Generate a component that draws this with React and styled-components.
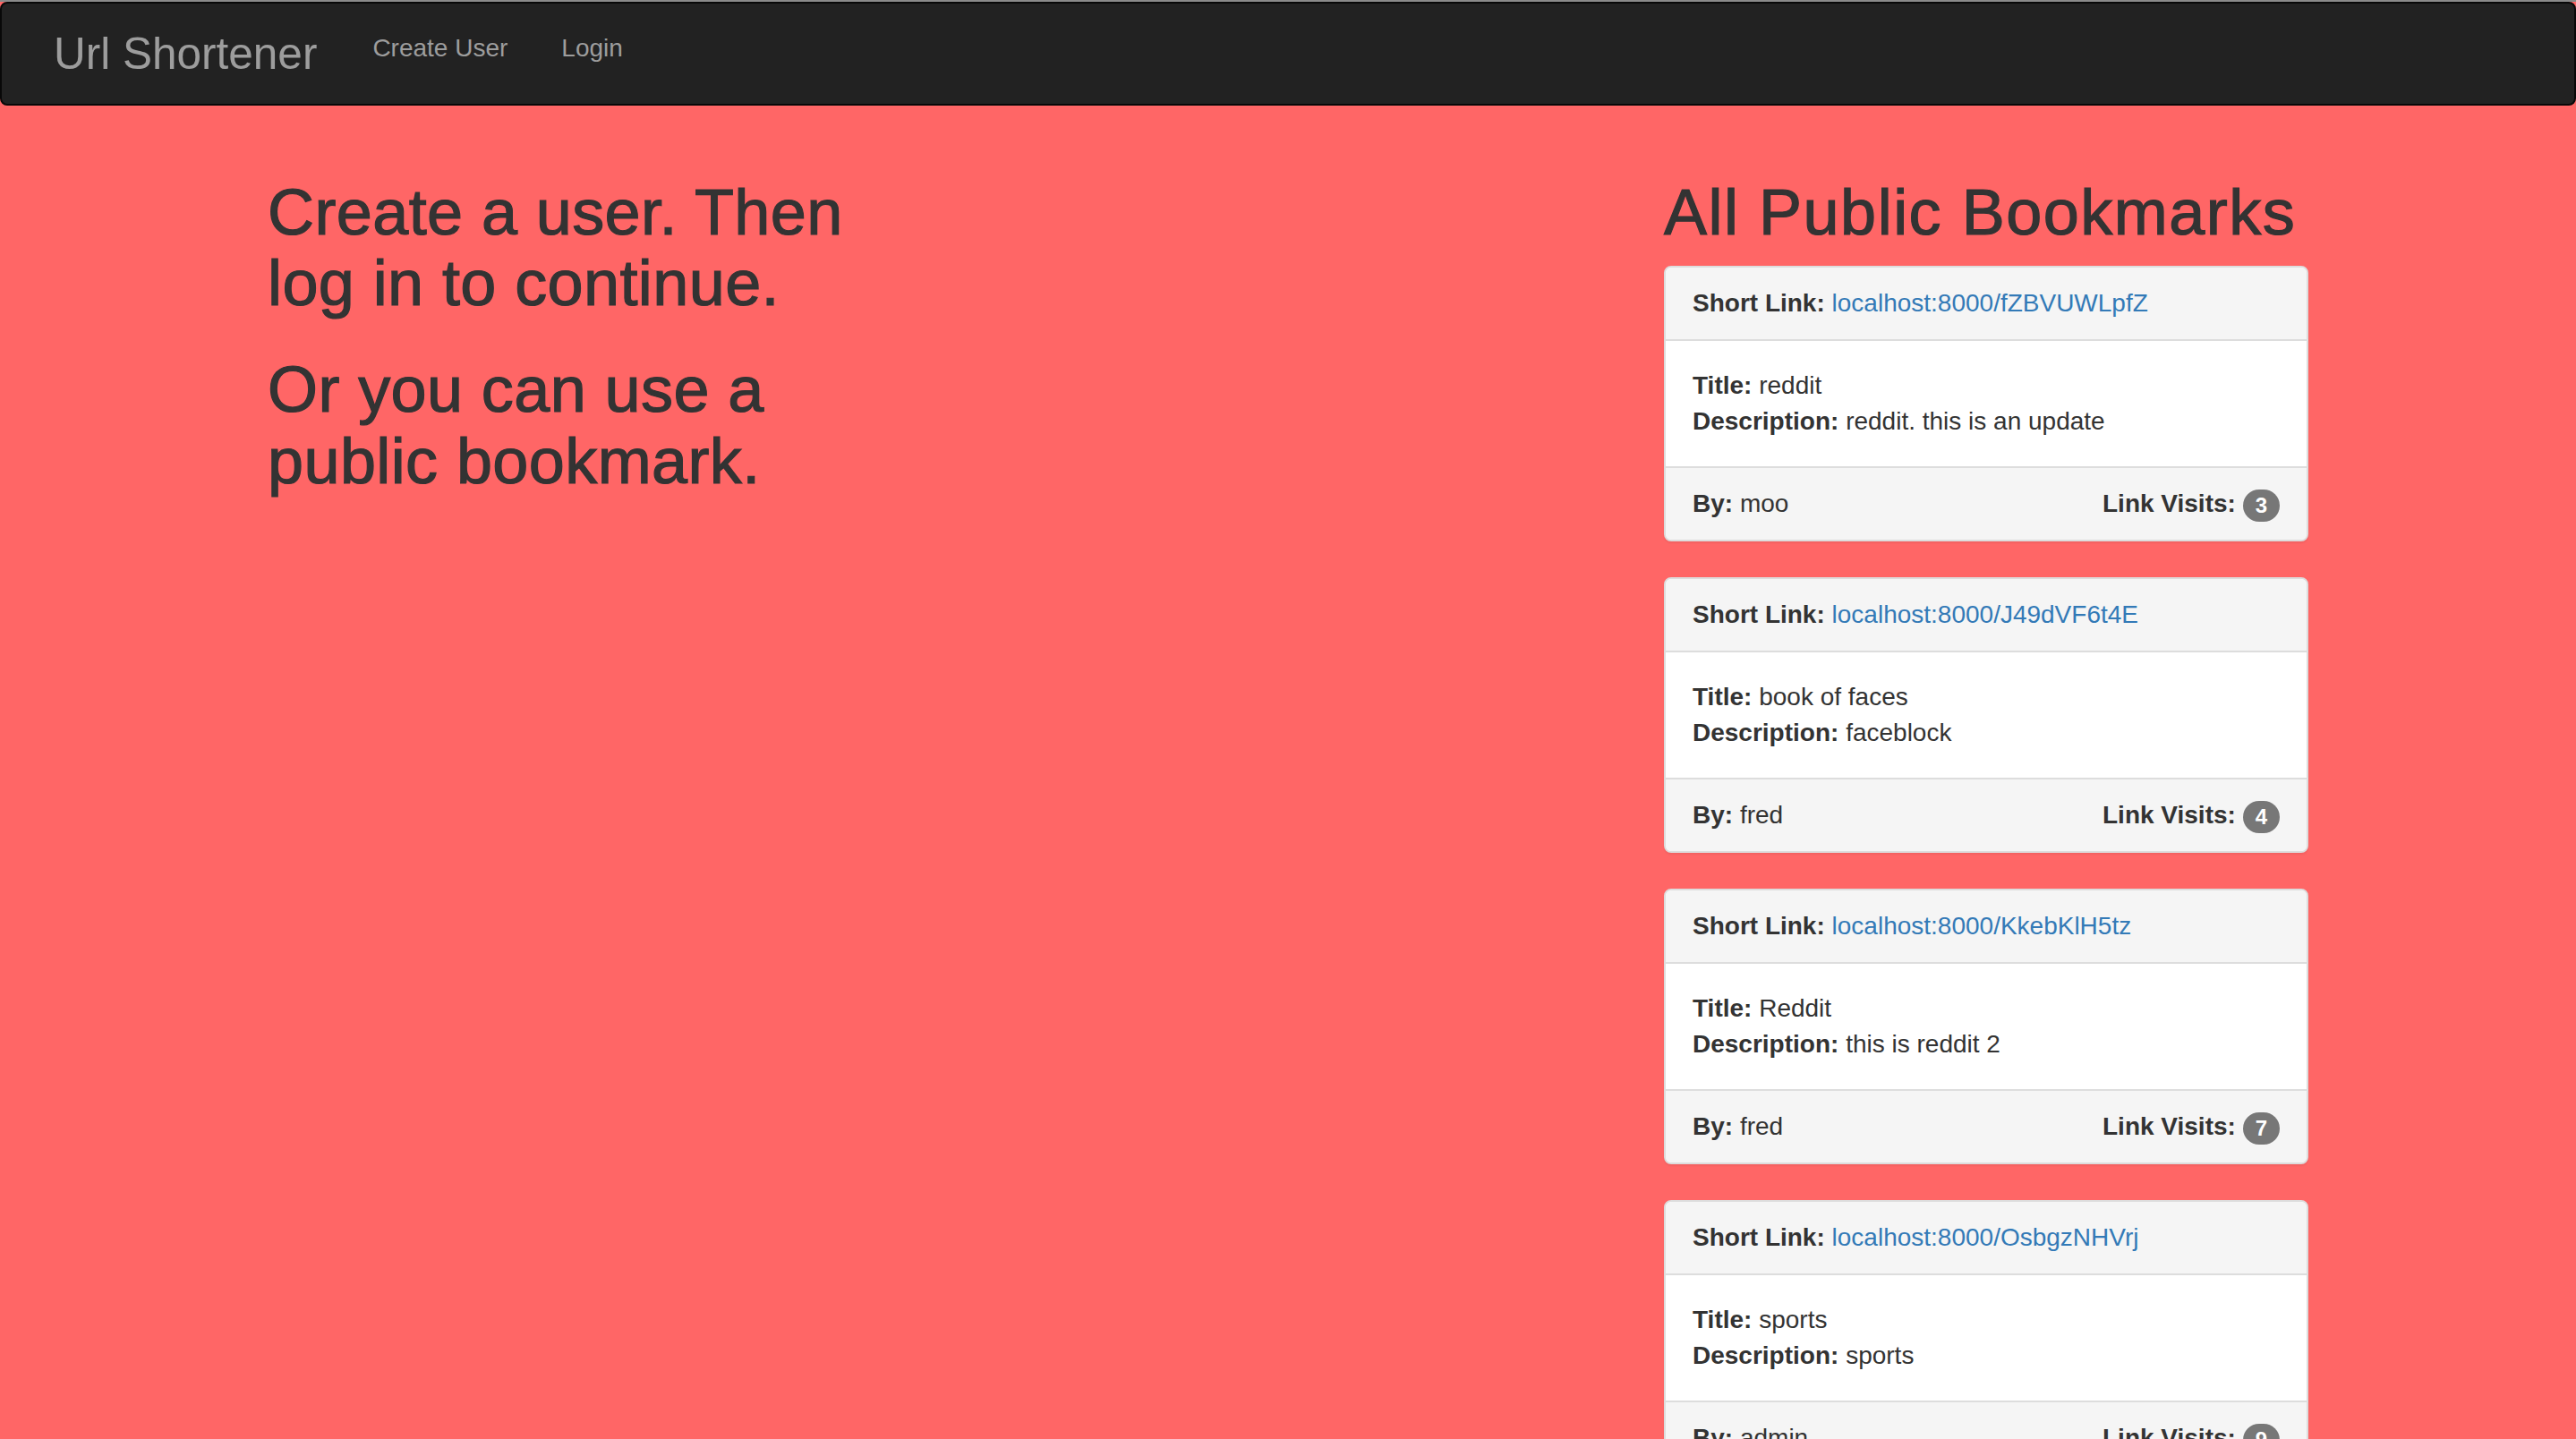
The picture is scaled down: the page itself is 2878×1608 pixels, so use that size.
import React from "react"
import styled, { createGlobalStyle } from "styled-components"

const GlobalStyle = createGlobalStyle`
  html {
    scrollbar-width: none;
  }
  html::-webkit-scrollbar {
    display: none;
  }
  body {
    margin: 0;
    border-top: 2px solid #8a8a8a;
    background: #ff6666;
    color: #333;
    font-family: "Liberation Sans", Arial, sans-serif;
    font-size: 28px;
    line-height: 40px;
  }
  * {
    box-sizing: border-box;
  }
`

const Navbar = styled.nav`
  display: flex;
  align-items: flex-start;
  height: 116px;
  margin-bottom: 40px;
  background: #222;
  border: 2px solid #080808;
  border-radius: 8px;
`

const Brand = styled.a`
  padding: 0 32px 0 58px;
  font-size: 49.5px;
  line-height: 112px;
  color: #9d9d9d;
  text-decoration: none;
`

const NavList = styled.ul`
  display: flex;
  margin: 0;
  padding: 0;
  list-style: none;
`

const NavLink = styled.a`
  display: block;
  padding: 30px;
  font-size: 28px;
  line-height: 40px;
  color: #9d9d9d;
  text-decoration: none;
`

const Container = styled.div`
  width: 2340px;
  margin: 0 auto;
  padding: 0 30px;
`

const Row = styled.div`
  display: grid;
  grid-template-columns: repeat(3, 1fr);
  column-gap: 60px;
`

const Column = styled.div`
  grid-column: ${p => p.$col};
`

// Helvetica Neue Medium stand-in: regular weight with a thin stroke
const Heading = styled.h1`
  margin: 40px 0 20px;
  font-size: 72px;
  font-weight: 500;
  line-height: 1.1;
  letter-spacing: ${p => p.$spacing || "0.4px"};
  color: #333;
  -webkit-text-stroke: 1.2px #333;
`

const Panel = styled.div`
  margin-bottom: 40px;
  background: #fff;
  border: 2px solid #ddd;
  border-radius: 8px;
  box-shadow: 0 2px 2px rgba(0, 0, 0, 0.05);
`

const PanelHeading = styled.div`
  padding: 20px 30px;
  background: #f5f5f5;
  border-bottom: 2px solid #ddd;
  border-radius: 6px 6px 0 0;
`

const PanelBody = styled.div`
  padding: 30px;
`

const PanelFooter = styled.div`
  display: flex;
  justify-content: space-between;
  align-items: baseline;
  padding: 20px 30px;
  background: #f5f5f5;
  border-top: 2px solid #ddd;
  border-radius: 0 0 6px 6px;
`

const Label = styled.strong`
  font-weight: bold;
`

const ShortLink = styled.a`
  color: #337ab7;
  text-decoration: none;
`

const Badge = styled.span`
  display: inline-block;
  min-width: 20px;
  padding: 6px 14px;
  font-size: 24px;
  font-weight: bold;
  line-height: 1;
  vertical-align: middle;
  text-align: center;
  color: #fff;
  background: #777;
  border-radius: 20px;
`

const bookmarks = [
  { code: "fZBVUWLpfZ", title: "reddit", description: "reddit. this is an update", by: "moo", visits: 3 },
  { code: "J49dVF6t4E", title: "book of faces", description: "faceblock", by: "fred", visits: 4 },
  { code: "KkebKlH5tz", title: "Reddit", description: "this is reddit 2", by: "fred", visits: 7 },
  { code: "OsbgzNHVrj", title: "sports", description: "sports", by: "admin", visits: 9 }
]

const BookmarkPanel = ({ bookmark }) => (
  <Panel>
    <PanelHeading>
      <Label>Short Link:</Label>{" "}
      <ShortLink href='#'>localhost:8000/{bookmark.code}</ShortLink>
    </PanelHeading>
    <PanelBody>
      <div>
        <Label>Title:</Label> {bookmark.title}
      </div>
      <div>
        <Label>Description:</Label> {bookmark.description}
      </div>
    </PanelBody>
    <PanelFooter>
      <span>
        <Label>By:</Label> {bookmark.by}
      </span>
      <span>
        <Label>Link Visits:</Label> <Badge>{bookmark.visits}</Badge>
      </span>
    </PanelFooter>
  </Panel>
)

const App = () => (
  <>
    <GlobalStyle />
    <Navbar>
      <Brand href='#'>Url Shortener</Brand>
      <NavList>
        <li>
          <NavLink href='#'>Create User</NavLink>
        </li>
        <li>
          <NavLink href='#'>Login</NavLink>
        </li>
      </NavList>
    </Navbar>
    <Container>
      <Row>
        <Column $col={1}>
          <Heading>Create a user. Then log in to continue.</Heading>
          <Heading>Or you can use a public bookmark.</Heading>
        </Column>
        <Column $col={3}>
          <Heading $spacing='1.5px'>All Public Bookmarks</Heading>
          {bookmarks.map(b => (
            <BookmarkPanel key={b.code} bookmark={b} />
          ))}
        </Column>
      </Row>
    </Container>
  </>
)

export default App
